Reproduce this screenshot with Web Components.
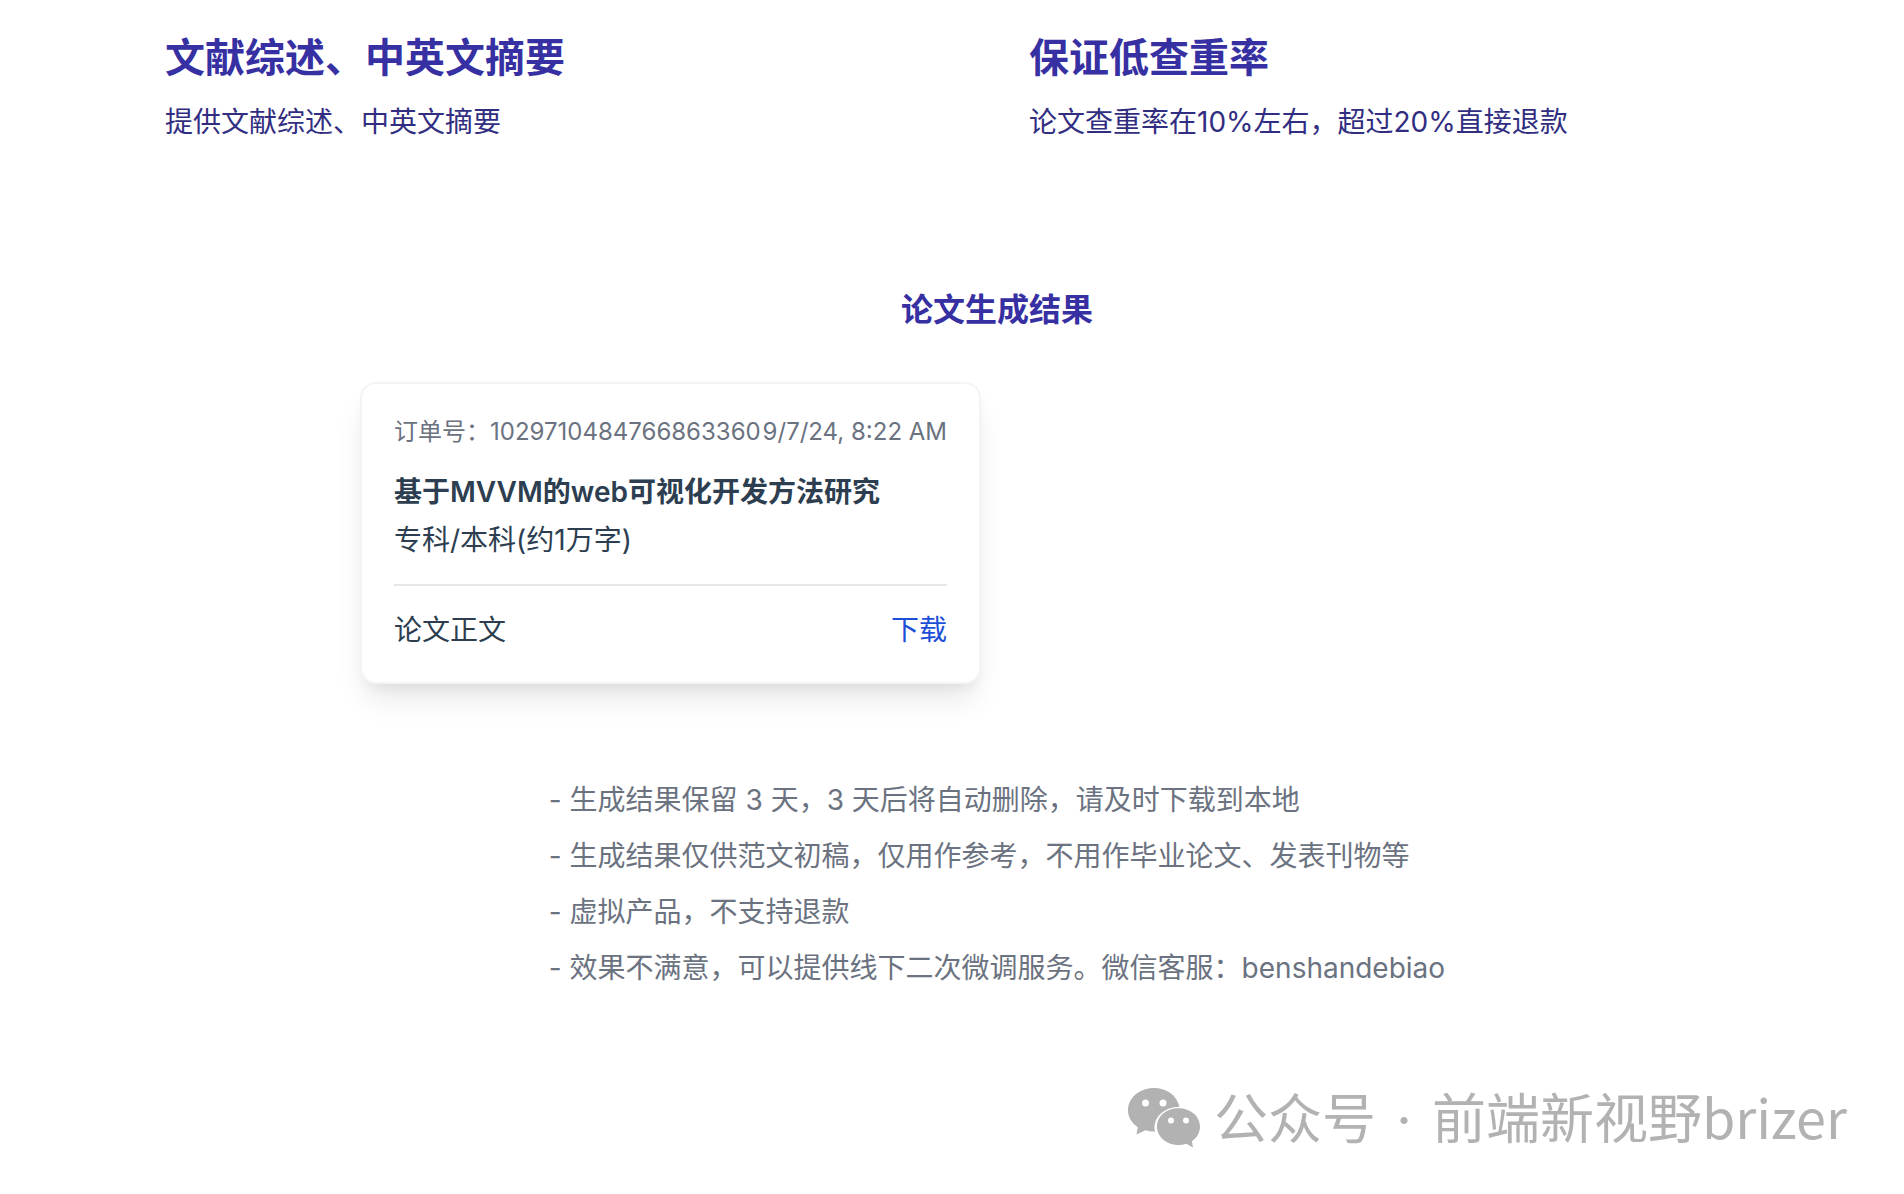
<!DOCTYPE html>
<html lang="zh-CN">
<head>
<meta charset="utf-8">
<meta name="viewport" content="width=device-width, initial-scale=1">
<title>论文生成结果</title>
<style>
  body { margin: 0; background: #fff; color: #2c3e50; font: 400 28px/40px Inter, "Noto Sans CJK SC", sans-serif; }
</style>
</head>
<body>
<paper-page>
  <feature-item slot="features" heading="文献综述、中英文摘要">提供文献综述、中英文摘要</feature-item>
  <feature-item slot="features" heading="保证低查重率">论文查重率在10%左右，超过20%直接退款</feature-item>
  <span slot="title">论文生成结果</span>
  <order-card slot="orders">
    <span slot="number">订单号：1029710484766863360</span>
    <span slot="time">9/7/24, 8:22 AM</span>
    <span slot="title">基于MVVM的web可视化开发方法研究</span>
    <span slot="level">专科/本科(约1万字)</span>
    <span slot="file">论文正文</span>
  </order-card>
  <note-list slot="notes">
    <note-item>- 生成结果保留 3 天，3 天后将自动删除，请及时下载到本地</note-item>
    <note-item>- 生成结果仅供范文初稿，仅用作参考，不用作毕业论文、发表刊物等</note-item>
    <note-item>- 虚拟产品，不支持退款</note-item>
    <note-item>- 效果不满意，可以提供线下二次微调服务。微信客服：benshandebiao</note-item>
  </note-list>
  <account-mark slot="mark"><span slot="kind">公众号</span>前端新视野brizer</account-mark>
</paper-page>

<script>
const define = (name, html) => customElements.define(name, class extends HTMLElement {
  constructor() {
    super();
    this.attachShadow({ mode: 'open' }).innerHTML = html;
  }
  connectedCallback() {
    const target = this.shadowRoot.querySelector('[data-heading]');
    if (target) target.textContent = this.getAttribute('heading');
  }
});

define('feature-item', `
  <style>
    :host { display: block; color: #312e81; }
    h2 { margin: 0 0 20px; font-size: 40px; line-height: 48px; font-weight: 600; color: #3730a3; }
    p { margin: 0; }
  </style>
  <h2 data-heading></h2>
  <p><slot></slot></p>`);

define('order-card', `
  <style>
    :host { display: block; box-sizing: border-box; padding: 32px; border: 2px solid #f3f4f6; border-radius: 16px;
      background: #fff; box-shadow: 0 20px 30px -6px rgba(0,0,0,.1), 0 8px 12px -4px rgba(0,0,0,.05); }
    .meta { display: flex; justify-content: space-between; margin-bottom: 24px; font-size: 24px; line-height: 32px; color: #6b7280; white-space: nowrap; }
    h3 { margin: 0 0 8px; font-size: 28px; line-height: 40px; font-weight: 600; }
    p { margin: 0; }
    .file { display: flex; justify-content: space-between; margin-top: 24px; padding-top: 24px; border-top: 2px solid #e5e7eb; }
    a { color: #1d4ed8; text-decoration: none; }
  </style>
  <div class="meta"><slot name="number"></slot><slot name="time"></slot></div>
  <h3><slot name="title"></slot></h3>
  <p><slot name="level"></slot></p>
  <div class="file"><slot name="file"></slot><a href="#download">下载</a></div>`);

define('note-item', `
  <style>:host { display: block; }</style>
  <slot></slot>`);

define('note-list', `
  <style>:host { display: flex; flex-direction: column; gap: 16px; color: #6b7280; }</style>
  <slot></slot>`);

define('account-mark', `
  <style>
    :host { display: flex; align-items: center; gap: 14px; color: #b2b2b2; font: 400 54px/64px "Noto Sans CJK SC", sans-serif; white-space: nowrap; }
    svg { width: 72px; height: 60px; flex: none; }
    .dot { padding: 0 8px; font-family: Inter, sans-serif; }
  </style>
  <svg viewBox="0 0 72 60" aria-hidden="true">
    <path fill="currentColor" d="M26 0C11.500 0 0 9.800 0 22.200c0 6.800 3.700 12.700 9.800 17L8.500 46.500l9-4.300c3 .9 6.200 1.300 9.500 1.200-3-12.600 8.500-24.600 24.500-24.600C49 8 39 0 26 0Z"/>
    <path fill="currentColor" d="M50.500 20.200C38.300 20.200 29 28.300 29 38.500S38.300 57 50.500 57c2.800 0 5.400-.4 7.800-1.200L65 59.500l-1.100-6.300c5-3.400 8.100-8.700 8.100-14.700 0-10.200-9.500-18.300-21.500-18.300Z"/>
    <g fill="#fff"><circle cx="17.500" cy="15" r="3.500"/><circle cx="35" cy="15" r="3.500"/><circle cx="43" cy="32.500" r="3"/><circle cx="58" cy="32.500" r="3"/></g>
  </svg>
  <span><slot name="kind"></slot> <span class="dot">·</span> <slot></slot></span>`);

define('paper-page', `
  <style>
    :host { display: block; padding: 34px 75px 28px 165px; }
    .features { display: grid; grid-template-columns: 1fr 1fr; gap: 64px; }
    h1 { margin: 144px 0 48px; font-size: 32px; line-height: 48px; font-weight: 600; text-align: center; color: #3730a3; }
    .orders { display: grid; grid-template-columns: 1fr 1fr; gap: 32px; max-width: 1274px; margin: 0 auto; }
    .notes { display: flex; justify-content: center; margin-top: 96px; }
    footer { display: flex; justify-content: flex-end; margin: 96px -18px 0 0; }
  </style>
  <main>
    <section class="features"><slot name="features"></slot></section>
    <h1><slot name="title"></slot></h1>
    <section class="orders"><slot name="orders"></slot></section>
    <section class="notes"><slot name="notes"></slot></section>
  </main>
  <footer><slot name="mark"></slot></footer>`);
</script>
</body>
</html>
